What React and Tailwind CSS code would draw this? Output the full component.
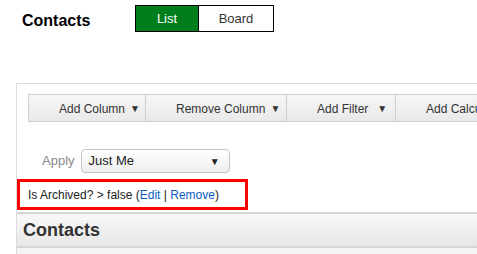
export default function App() {
  const tools = [
    { label: 'Add Column', w: 'w-[117px]', gap: 'ml-[5px]' },
    { label: 'Remove Column', w: 'w-[141px]', gap: 'ml-[5px]' },
    { label: 'Add Filter', w: 'w-[109px]', gap: 'ml-[9px]' },
    { label: 'Add Calculation', w: 'w-[130px]', gap: 'ml-[5px]' },
  ];

  return (
    <div
      className="w-[477px] h-[254px] overflow-hidden bg-white flex flex-col"
      style={{ fontFamily: '"Liberation Sans", Arial, sans-serif' }}
    >
      <div className="flex items-center pt-[5px] pl-[22px]">
        <h1 className="text-[16px] font-bold text-black w-[113px] leading-none mt-[5px]">Contacts</h1>
        <div className="flex h-[27px] border border-black">
          <button className="w-[63px] bg-[#007e1b] text-white text-[13px] border-r border-black">List</button>
          <button className="w-[74px] bg-white text-[#333] text-[13px]">Board</button>
        </div>
      </div>

      <div className="mt-[51px] ml-[16px] flex-1 border-l border-t border-[#dcdcdc] flex flex-col">
        <div className="pt-[10px] pl-[11px]">
          <div className="flex h-[28px] border border-r-0 border-[#cfcfcf] bg-gradient-to-b from-[#f6f6f6] to-[#e9e9e9] whitespace-nowrap">
            {tools.map((t, i) => (
              <div
                key={t.label}
                className={`${t.w} shrink-0 flex items-center pl-[30px] pt-[1px] text-[12px] text-[#333] ${i < 3 ? 'border-r border-[#cfcfcf]' : ''}`}
              >
                <span>{t.label}</span>
                {i < 3 && <span className={`${t.gap} text-[10px]`}>▼</span>}
              </div>
            ))}
          </div>
        </div>

        <div className="flex items-center mt-[27px] pl-[25px]">
          <span className="text-[13px] text-[#888] mr-[6px]">Apply</span>
          <div className="w-[149px] h-[24px] rounded-[4px] border border-[#c4c4c4] bg-gradient-to-b from-white to-[#eeeeee] flex items-center justify-between pl-[7px] pr-[9px]">
            <span className="text-[13px] text-[#222]">Just Me</span>
            <span className="text-[10px] text-[#222]">▼</span>
          </div>
        </div>

        <div className="mt-[6px] w-[231px] h-[31px] border-[3px] border-[#ff0000] flex items-center pl-[8px] text-[12px] text-[#222] whitespace-nowrap">
          Is Archived? &gt; false (<span className="text-[#0b5cbe]">Edit</span>&nbsp;|&nbsp;<span className="text-[#0b5cbe]">Remove</span>)
        </div>

        <div className="mt-[2px] h-[36px] border-t-2 border-b-2 border-[#d4d4d4] bg-gradient-to-b from-[#f8f8f8] to-[#e8e8e8] flex items-center pl-[6px]">
          <span className="text-[18px] font-bold text-[#333]">Contacts</span>
        </div>
        <div className="flex-1 bg-[#f4f4f4]" />
      </div>
    </div>
  );
}
